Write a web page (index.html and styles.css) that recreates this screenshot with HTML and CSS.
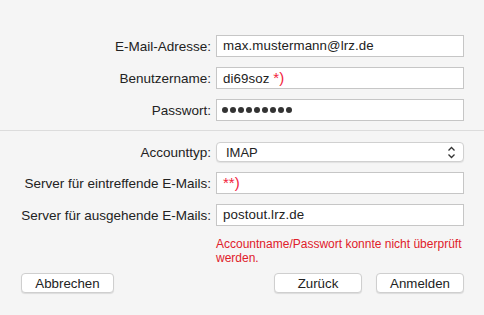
FILE: index.html
```html
<!DOCTYPE html>
<html lang="de">

<head>
    <meta charset="UTF-8">
    <meta name="viewport" content="width=device-width, initial-scale=1.0">
    <title>Account hinzufügen</title>

    <link rel="stylesheet" href="styles.css">

</head>

<body>
    <div class="sheet">
        <div class="section top">
            <div class="row">
                <label class="label">E-Mail-Adresse:</label>
                <div class="field">max.mustermann@lrz.de</div>
            </div>
            <div class="row">
                <label class="label">Benutzername:</label>
                <div class="field">di69soz <span class="mark">*)</span></div>
            </div>
            <div class="row">
                <label class="label">Passwort:</label>
                <div class="field dots">
                    <span class="dot"></span><span class="dot"></span><span class="dot"></span>
                    <span class="dot"></span><span class="dot"></span><span class="dot"></span>
                    <span class="dot"></span><span class="dot"></span><span class="dot"></span>
                </div>
            </div>
        </div>

        <div class="section bottom">
            <div class="row">
                <label class="label">Accounttyp:</label>
                <div class="popup">
                    <span>IMAP</span>
                    <svg class="chevrons" width="9" height="13" viewBox="0 0 9 13">
                        <path d="M1.5 4.5 L4.5 1.5 L7.5 4.5" fill="none" stroke="#333" stroke-width="1.3"/>
                        <path d="M1.5 8.5 L4.5 11.5 L7.5 8.5" fill="none" stroke="#333" stroke-width="1.3"/>
                    </svg>
                </div>
            </div>
            <div class="row">
                <label class="label">Server für eintreffende E-Mails:</label>
                <div class="field"><span class="mark">**)</span></div>
            </div>
            <div class="row">
                <label class="label">Server für ausgehende E-Mails:</label>
                <div class="field">postout.lrz.de</div>
            </div>
            <div class="row">
                <div class="label"></div>
                <div class="error">Accountname/Passwort konnte nicht überprüft<br>werden.</div>
            </div>
        </div>

        <div class="buttons">
            <button class="btn cancel">Abbrechen</button>
            <div class="spacer"></div>
            <button class="btn">Zurück</button>
            <button class="btn">Anmelden</button>
        </div>
    </div>
</body>

</html>
```

FILE: styles.css
```css
* {
    margin: 0;
    padding: 0;
    box-sizing: border-box;
}

body {
    background-color: #f5f5f5;
    font-family: "Liberation Sans", Arial, sans-serif;
    font-size: 13.5px;
    color: #222;
    height: 100vh;
    overflow: hidden;
}

.sheet {
    padding-top: 35px;
}

.section {
    display: flex;
    flex-direction: column;
    gap: 10px;
}

.top {
    padding-bottom: 9px;
    border-bottom: 1px solid #dcdcdc;
}

.bottom {
    padding-top: 11px;
}

.row {
    display: flex;
    align-items: center;
}

.label {
    width: 216px;
    padding-right: 5px;
    text-align: right;
    flex-shrink: 0;
}

.field {
    width: 248px;
    height: 22px;
    background-color: #fff;
    border: 1px solid #c6c6c6;
    padding: 0 6px;
    font-size: 13.3px;
    letter-spacing: 0.1px;
    line-height: 20px;
    white-space: nowrap;
}

.mark {
    color: #f2233c;
    font-size: 15px;
    letter-spacing: 0;
}

.dots {
    display: flex;
    align-items: center;
    gap: 2px;
    padding-left: 5px;
}

.dot {
    width: 6px;
    height: 6px;
    border-radius: 50%;
    background-color: #333;
}

.popup {
    width: 248px;
    height: 20px;
    background-color: #fff;
    border-radius: 4px;
    border: 1px solid #d0d0d0;
    box-shadow: 0 1px 1px rgba(0,0,0,0.08);
    display: flex;
    align-items: center;
    justify-content: space-between;
    padding: 0 7px 0 9px;
    font-size: 13px;
}

.error {
    color: #e0202a;
    font-size: 12px;
    line-height: 13.5px;
    white-space: nowrap;
    margin-top: 2px;
}

.buttons {
    display: flex;
    align-items: center;
    gap: 14px;
    padding: 8px 20px 0 21px;
}

.spacer {
    flex: 1;
}

.btn {
    width: 88px;
    height: 20px;
    background-color: #fff;
    border: 1px solid #cfcfcf;
    border-radius: 4px;
    box-shadow: 0 1px 1px rgba(0,0,0,0.1);
    font-family: "Liberation Sans", Arial, sans-serif;
    font-size: 13.3px;
    color: #222;
}

.cancel {
    width: 93px;
}
```
